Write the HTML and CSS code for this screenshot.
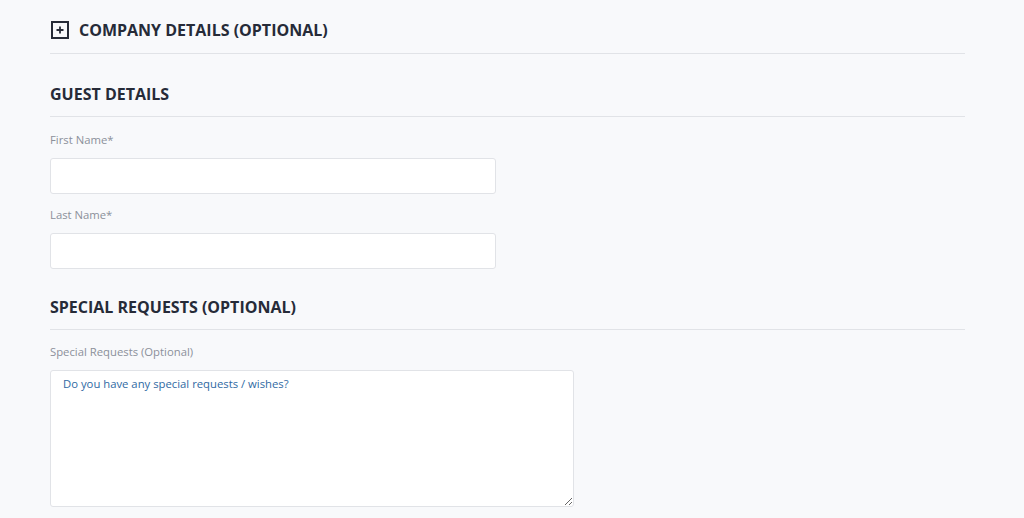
FILE: index.html
```html
<!DOCTYPE html>
<html lang="en">
<head>
    <meta charset="UTF-8">
    <title>Booking Details</title>
    <link rel="stylesheet" href="styles.css">
</head>
<body>
<div class="container">
    <div class="section section-company">
        <h3 class="section-title">
            <span class="toggle-box">
                <svg width="8" height="8" viewBox="0 0 8 8"><path d="M4 0.5v7M0.5 4h7" stroke="#262b38" stroke-width="1.8"/></svg>
            </span>
            Company Details (Optional)
        </h3>
    </div>

    <div class="section">
        <h3 class="section-title">Guest Details</h3>
        <div class="field">
            <label for="firstName">First Name*</label>
            <input id="firstName" type="text" name="firstName">
        </div>
        <div class="field">
            <label for="lastName">Last Name*</label>
            <input id="lastName" type="text" name="lastName">
        </div>
    </div>

    <div class="section section-requests">
        <h3 class="section-title">Special Requests (Optional)</h3>
        <div class="field">
            <label for="requests">Special Requests (Optional)</label>
            <textarea id="requests" name="requests" placeholder="Do you have any special requests / wishes?"></textarea>
        </div>
    </div>
</div>
</body>
</html>
```

FILE: styles.css
```css
body {
    background-color: #f8f9fb;
    font-family: "Open Sans", Arial, sans-serif;
    color: #2b303d;
    margin: 0;
    padding: 0;
}

.container {
    width: 915px;
    margin-left: 50px;
    padding-top: 19px;
}

.section {
    margin-bottom: 27px;
}

.section-company {
    margin-bottom: 29px;
}

.section-title {
    display: flex;
    align-items: center;
    margin: 0 0 15px 0;
    height: 22px;
    line-height: 22px;
    padding-bottom: 11px;
    border-bottom: 1px solid #e1e3e7;
    font-size: 16px;
    font-weight: 700;
    text-transform: uppercase;
    color: #262b38;
}

.section-company .section-title {
    padding-bottom: 12px;
}

.section-requests .section-title {
    margin-bottom: 14px;
}

.toggle-box {
    display: flex;
    align-items: center;
    justify-content: center;
    width: 14px;
    height: 14px;
    border: 2px solid #262b38;
    margin: 0 10px 0 1px;
}

.toggle-box svg {
    display: block;
}

.field {
    margin-bottom: 13px;
}

label {
    display: block;
    font-size: 11.3px;
    line-height: 16px;
    color: #8b909a;
    margin-bottom: 10px;
}

input, textarea {
    display: block;
    box-sizing: border-box;
    background-color: #fff;
    border: 1px solid #e1e3e7;
    border-radius: 3px;
    font-family: "Open Sans", Arial, sans-serif;
    font-size: 11.3px;
}

input {
    width: 446px;
    height: 36px;
    padding: 0 12px;
}

textarea {
    width: 524px;
    height: 137px;
    padding: 5px 12px;
    resize: vertical;
}

textarea::placeholder {
    color: #2f6aa3;
    opacity: 1;
}
```
